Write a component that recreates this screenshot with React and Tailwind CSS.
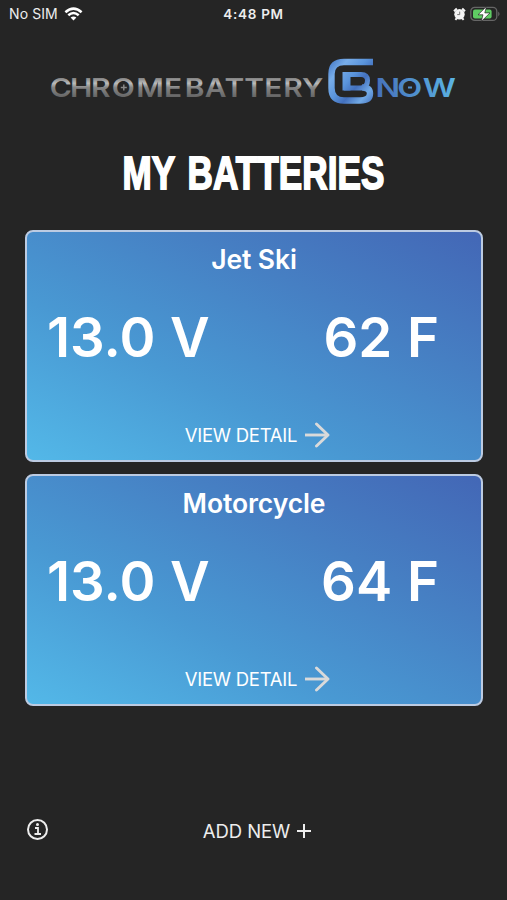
import React from "react";

function StatusBar() {
  return (
    <header className="grid h-7 grid-cols-3 items-center px-[9px] font-['Inter',sans-serif] text-[13px] leading-7 text-[#ededed]">
      <div className="flex items-center gap-[6px]">
        <span className="whitespace-nowrap text-[14px] tracking-[0.1px]">No SIM</span>
        <svg width="19" height="14" viewBox="0 0 19 14" fill="none" stroke="#fff" strokeWidth="2.5">
          <path d="M1.4 5.2 Q9.5 -2 17.6 5.2" />
          <path d="M4.3 8.3 Q9.5 3.7 14.7 8.3" />
          <path d="M6.6 10.6 Q9.5 8.2 12.4 10.6 L9.5 13.6Z" fill="#fff" stroke="none" />
        </svg>
      </div>
      <div className="whitespace-nowrap text-center text-[13.5px] font-semibold tracking-[0.7px]">4:48 PM</div>
      <div className="-mr-[3px] flex items-center justify-end gap-[4px]">
        <svg width="13" height="14" viewBox="0 0 13 14">
          <circle cx="6.5" cy="7.3" r="5.2" fill="#f4f4f4" />
          <path d="M1 4.2 L3.8 1.5 M12 4.2 L9.2 1.5 M2.4 12.8 L3.8 11.2 M10.6 12.8 L9.2 11.2" stroke="#f4f4f4" strokeWidth="2" />
          <path d="M6.7 4.6 V7.6 H4.2" stroke="#777" strokeWidth="1" fill="none" />
        </svg>
        <svg width="31" height="16" viewBox="0 0 31 16">
          <rect x="0.8" y="1.4" width="26" height="13" rx="4" fill="none" stroke="#666" strokeWidth="1.3" />
          <rect x="3" y="3.5" width="18.6" height="9" rx="2" fill="#5fcb63" />
          <path d="M28.2 5.6 Q31 8 28.2 10.4Z" fill="#666" />
          <path d="M16.5 0.4 L8 8.8 H13 L11.2 15.6 L20 6.9 H14.8Z" fill="#fff" stroke="#252525" strokeWidth="0.7" />
        </svg>
      </div>
    </header>
  );
}

function Logo() {
  return (
    <svg className="mx-auto block" width="410" height="50" viewBox="49 56 410 50" role="img" aria-label="ChromeBattery Now">
      <defs>
        <linearGradient id="chrome" gradientUnits="userSpaceOnUse" x1="0" y1="77" x2="0" y2="98">
          <stop offset="0" stopColor="#777" />
          <stop offset="0.3" stopColor="#bbb" />
          <stop offset="0.5" stopColor="#858585" />
          <stop offset="1" stopColor="#626262" />
        </linearGradient>
        <linearGradient id="now" gradientUnits="userSpaceOnUse" x1="301" y1="95" x2="365" y2="80">
          <stop offset="0" stopColor="#466fb9" />
          <stop offset="1" stopColor="#5bb5e4" />
        </linearGradient>
        <linearGradient id="mark" gradientUnits="userSpaceOnUse" x1="328" y1="62" x2="374" y2="102">
          <stop offset="0" stopColor="#4378c8" />
          <stop offset="0.22" stopColor="#78ade9" />
          <stop offset="0.45" stopColor="#5a94db" />
          <stop offset="0.62" stopColor="#4370bd" />
          <stop offset="0.82" stopColor="#72aae6" />
          <stop offset="1" stopColor="#4673bf" />
        </linearGradient>
      </defs>
      <g fontFamily="Inter, sans-serif" fontSize="26" fontWeight="600">
        <text transform="scale(1.15 1)" y="97" x="43.300 60.9 79.100 97.200 118.400 142.6 160.600 178 195.3 212.3 229.700 246.300 262.6" fill="url(#chrome)">CHROMEBATTERY</text>
        <text transform="scale(1.25 1)" y="97" x="300.500 317.800 338.300" fill="url(#now)">NOW</text>
      </g>
      <path d="M123.800 84.500v6M120.800 87.500h6" stroke="#888" strokeWidth="1.5" />
      <path d="M408 87.500h4" stroke="#5292d0" strokeWidth="2" />
      <g fill="none" stroke="url(#mark)" strokeWidth="6" strokeLinejoin="round">
        <path d="M373 62 H344 Q331.500 62 331.500 74 V88 Q331.500 100.500 344 100.500 H360 Q370 100.500 370 93.500 Q370 87.500 362 87.500" strokeWidth="6.400" />
        <path d="M344 88 H361 Q367.500 87 367.500 80.500 Q367.500 74.500 361 74.500 H343" strokeWidth="5" />
        <path d="M346.500 72 V90.500" strokeWidth="8" />
      </g>
    </svg>
  );
}

function ArrowIcon() {
  return (
    <svg width="26" height="26" viewBox="0 0 26 26" fill="none" stroke="#dadada" strokeWidth="2.9">
      <path d="M1 13 H24" />
      <path d="M12.500 2 L24 13 L12.500 24" strokeLinejoin="round" strokeLinecap="round" />
    </svg>
  );
}

function BatteryCard({ name, volts, temperature }) {
  return (
    <section className="flex h-[232px] flex-col rounded-[8px] border-[2px] border-[#bccbe2] bg-[linear-gradient(to_top_right,#53b8e8_0%,#4999d3_35%,#467fc3_68%,#4367b6_100%)] text-white">
      <h2 className="mt-[10px] text-center font-['Inter',sans-serif] text-[26.5px] font-semibold tracking-[-0.1px] leading-[34px]">{name}</h2>
      <div className="mt-[29px] flex justify-between pr-[42px] pl-[20px] font-['Inter',sans-serif] text-[54.5px] font-semibold leading-[64px] [word-spacing:1px]">
        <div className="whitespace-nowrap">{volts} V</div>
        <div className="whitespace-nowrap">{temperature} F</div>
      </div>
      <button className="mt-[53px] ml-[7px] flex items-center justify-center gap-[7px] font-['Inter',sans-serif] text-[18.5px] tracking-[-0.25px] leading-[26px]">
        <span>VIEW DETAIL</span>
        <ArrowIcon />
      </button>
    </section>
  );
}

export default function App() {
  return (
    <main className="flex h-[900px] w-[507px] flex-col bg-[#252525]">
      <StatusBar />
      <div className="mt-7">
        <Logo />
      </div>
      <h1 className="mt-[42px] scale-x-[0.763] text-center font-['Liberation_Sans',sans-serif] text-[46px] font-bold leading-[50px] text-white [-webkit-text-stroke:1.8px_white] [word-spacing:4px] tracking-[0.1px]">MY BATTERIES</h1>
      <div className="mt-[32px] flex flex-col gap-3 pr-[24px] pl-[25px]">
        <BatteryCard name="Jet Ski" volts="13.0" temperature="62" />
        <BatteryCard name="Motorcycle" volts="13.0" temperature="64" />
      </div>
      <footer className="mt-[110px] grid grid-cols-3 items-center px-[26px] text-[#ededed]">
        <svg className="-mt-[2px]" width="23" height="23" viewBox="0 0 23 23" fill="none" stroke="#ededed" strokeWidth="2">
          <circle cx="11.500" cy="11.500" r="9.500" />
          <path d="M9 10 H12 V16 M8.500 16 H15" strokeWidth="1.800" />
          <circle cx="11.500" cy="6.500" r="1.500" fill="#ededed" stroke="none" />
        </svg>
        <button className="mt-[2px] ml-[7px] flex items-center justify-center gap-[7px] whitespace-nowrap font-['Inter',sans-serif] text-[18.5px] leading-[26px] tracking-[-0.1px]">
          <span>ADD NEW</span>
          <svg width="14" height="14" viewBox="0 0 14 14" stroke="#ededed" strokeWidth="2"><path d="M7 0V14M0 7H14" /></svg>
        </button>
      </footer>
    </main>
  );
}
